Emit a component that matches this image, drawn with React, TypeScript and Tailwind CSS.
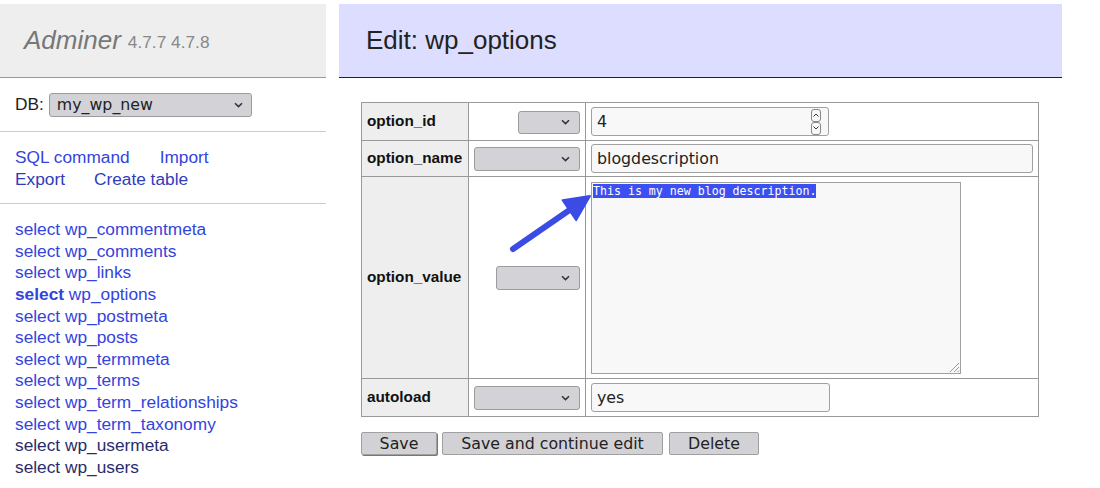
import React from "react";

const tables = [
	"wp_commentmeta",
	"wp_comments",
	"wp_links",
	"wp_options",
	"wp_postmeta",
	"wp_posts",
	"wp_termmeta",
	"wp_terms",
	"wp_term_relationships",
	"wp_term_taxonomy",
	"wp_usermeta",
	"wp_users",
];

const Chevron = () => (
	<svg width="9" height="6" viewBox="0 0 9 6" className="shrink-0">
		<path d="M1 1.2 4.5 4.6 8 1.2" fill="none" stroke="#333" strokeWidth="1.5" />
	</svg>
);

const Select = ({ className }: { className: string }) => (
	<div
		className={`${className} inline-flex items-center justify-end pr-[9px] bg-[#d3d3d7] border border-[#9c9c9c] rounded-[3px] align-middle`}
	>
		<Chevron />
	</div>
);

const Field = ({ className, value }: { className: string; value: string }) => (
	<div
		className={`${className} h-[29px] flex items-center px-[5px] bg-[#f8f8f8] border border-[#a0a0a0] rounded-[3px] text-[15.8px] text-[#222] font-['DejaVu_Sans',sans-serif]`}
	>
		{value}
	</div>
);

const Spinner = () => (
	<div className="ml-auto flex flex-col">
		<div className="w-[10px] h-[13px] border border-[#888] rounded-[3px] flex items-center justify-center">
			<svg width="6" height="4" viewBox="0 0 6 4">
				<path d="M0.5 3.5 3 1 5.5 3.5" fill="none" stroke="#333" strokeWidth="1" />
			</svg>
		</div>
		<div className="w-[10px] h-[13px] border border-[#888] rounded-[3px] flex items-center justify-center">
			<svg width="6" height="4" viewBox="0 0 6 4">
				<path d="M0.5 0.5 3 3 5.5 0.5" fill="none" stroke="#333" strokeWidth="1" />
			</svg>
		</div>
	</div>
);

const Button = ({ className, label }: { className: string; label: string }) => (
	<div
		className={`${className} h-[23px] flex items-center justify-center bg-[#d2d2d6] border border-[#a0a0a0] rounded-[2px] text-[15.8px] text-[#222] font-['DejaVu_Sans',sans-serif]`}
	>
		{label}
	</div>
);

const App = () => {
	const th = "bg-[#eee] border border-[#999] text-left px-[5px] font-bold text-[15.3px] text-[#111] align-middle";
	const sel = "border border-[#999] text-right pr-[5px] align-middle";
	const val = "border border-[#999] pl-[5px] align-middle";

	return (
		<div className="w-[1100px] h-[488px] bg-white flex overflow-hidden font-['Liberation_Sans',Arial,sans-serif] text-[#222]">
			{/* sidebar */}
			<div className="w-[326px] shrink-0 flex flex-col">
				<div className="mt-1 h-[74px] bg-[#eee] border-b border-[#999] flex items-center pl-6 gap-[7px]">
					<span className="italic text-[26px] text-[#777]">Adminer</span>
					<span className="text-[17.3px] text-[#888] mt-[5px]">4.7.7 4.7.8</span>
				</div>
				<div className="h-[54px] border-b border-[#ccc] flex items-center pl-[15px] gap-[5px] text-[17.3px]">
					<span>DB:</span>
					<div className="w-[203px] h-[24px] flex items-center justify-between pl-[7px] pr-[8px] bg-[#d3d3d7] border border-[#9c9c9c] rounded-[3px] font-['DejaVu_Sans',sans-serif] text-[15.8px]">
						<span>my_wp_new</span>
						<Chevron />
					</div>
				</div>
				<div className="h-[72px] border-b border-[#ccc] flex flex-col justify-center pl-[15px] text-[17.3px] leading-[22px] text-[#3344dd]">
					<div className="flex gap-[30px]">
						<span>SQL command</span>
						<span>Import</span>
					</div>
					<div className="flex gap-[29px] text-[#2f3cbb]">
						<span>Export</span>
						<span>Create table</span>
					</div>
				</div>
				<ul className="pt-[15px] pl-[15px] text-[17.3px] leading-[21.64px]">
					{tables.map((t, i) => (
						<li key={t} className={i >= 10 ? "text-[#2a2c6a]" : "text-[#3344dd]"}>
							<span className={t === "wp_options" ? "font-bold" : ""}>select</span> {t}
						</li>
					))}
				</ul>
			</div>

			{/* main */}
			<div className="relative ml-[13px] w-[723px] shrink-0 flex flex-col">
				<div className="mt-1 h-[74px] bg-[#ddf] border-b border-[#222] flex items-center pl-[27px]">
					<h2 className="text-[26px] text-[#222]">Edit: wp_options</h2>
				</div>

				<div className="pt-[24px] pl-[22px]">
					<table className="table-fixed border-collapse w-[677px]">
						<colgroup>
							<col className="w-[107px]" />
							<col className="w-[117px]" />
							<col className="w-[453px]" />
						</colgroup>
						<tbody>
							<tr className="h-[38px]">
								<th className={th}>option_id</th>
								<td className={sel}>
									<Select className="w-[62px] h-[23px]" />
								</td>
								<td className={val}>
									<div className="w-[238px] h-[29px] flex items-center pl-[5px] pr-[7px] bg-[#f8f8f8] border border-[#a0a0a0] rounded-[3px] text-[15.8px] font-['DejaVu_Sans',sans-serif]">
										<span>4</span>
										<Spinner />
									</div>
								</td>
							</tr>
							<tr className="h-[36px]">
								<th className={th}>option_name</th>
								<td className={sel}>
									<Select className="w-[106px] h-[24px]" />
								</td>
								<td className={val}>
									<Field className="w-[442px]" value="blogdescription" />
								</td>
							</tr>
							<tr className="h-[202px]">
								<th className={th}>option_value</th>
								<td className={sel}>
									<Select className="w-[84px] h-[24px]" />
								</td>
								<td className={val}>
									<div className="relative w-[370px] h-[192px] bg-[#f8f8f8] border border-[#a0a0a0] pt-[1px] pl-[1px] font-['DejaVu_Sans_Mono',monospace] text-[11.6px] leading-[14px]">
										<span className="bg-[#3b4ff2] text-white">This is my new blog description.</span>
										<svg className="absolute right-0 bottom-0" width="12" height="12" viewBox="0 0 12 12">
											<path d="M11 2 2 11M11 6 6 11M11 9.5 9.5 11" stroke="#999" strokeWidth="1" fill="none" />
										</svg>
									</div>
								</td>
							</tr>
							<tr className="h-[38px]">
								<th className={th}>autoload</th>
								<td className={sel}>
									<Select className="w-[106px] h-[24px]" />
								</td>
								<td className={val}>
									<Field className="w-[239px]" value="yes" />
								</td>
							</tr>
						</tbody>
					</table>

					<div className="mt-[15px] flex gap-[5px]">
						<Button className="w-[76px] shadow-[1px_1px_0_#777]" label="Save" />
						<Button className="w-[221px]" label="Save and continue edit" />
						<Button className="w-[90px] ml-[1px]" label="Delete" />
					</div>
				</div>

				{/* annotation arrow */}
				<svg className="absolute left-[160px] top-[185px]" width="100" height="75" viewBox="0 0 100 75">
					<path d="M14 64 72 24" stroke="#3b4ce5" strokeWidth="6" strokeLinecap="round" fill="none" />
					<path d="M91 11 63.6 15.3 77.2 35.1Z" fill="#3b4ce5" stroke="#3b4ce5" strokeWidth="2" strokeLinejoin="round" />
				</svg>
			</div>
		</div>
	);
};

export default App;
